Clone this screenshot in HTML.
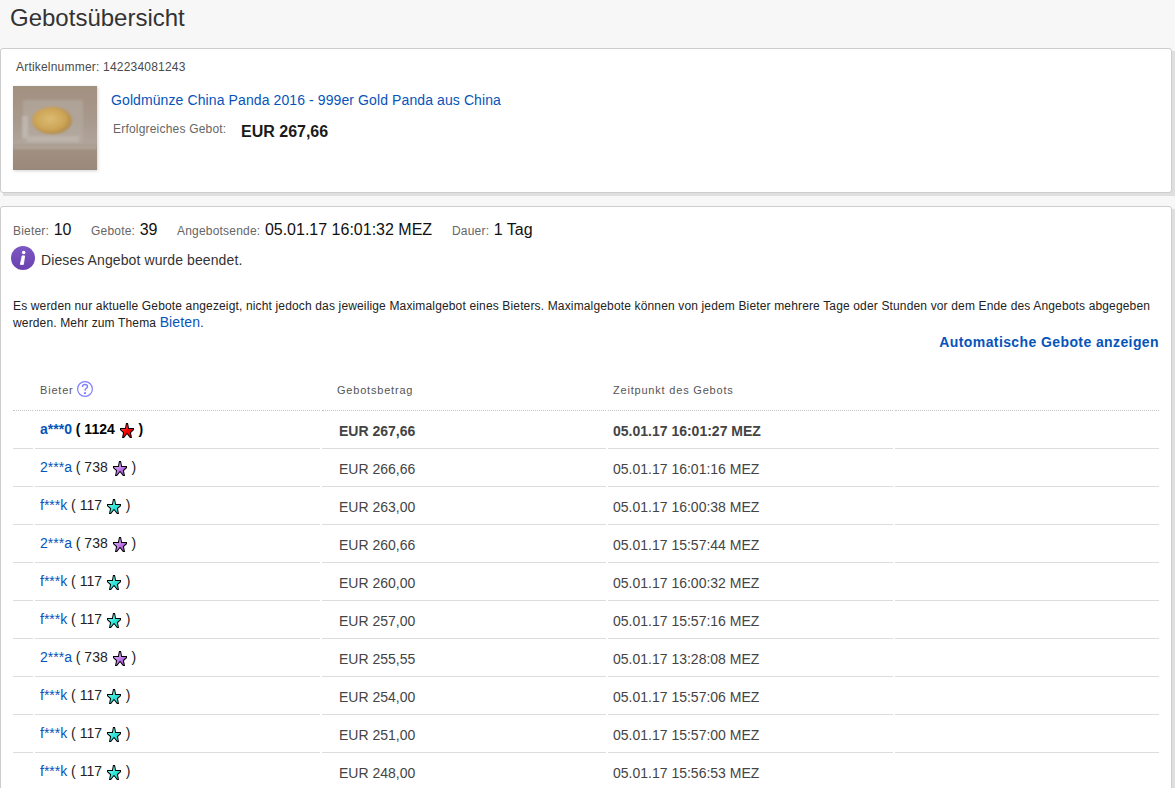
<!DOCTYPE html>
<html><head><meta charset="utf-8">
<style>
html,body{margin:0;padding:0;}
body{width:1175px;height:788px;overflow:hidden;background:#f7f7f7;font-family:"Liberation Sans",sans-serif;color:#333;position:relative;}
.abs{position:absolute;white-space:nowrap;}
h1{position:absolute;left:10px;top:3px;margin:0;font-size:24px;font-weight:normal;color:#333;line-height:30px;}
.panel{position:absolute;left:0;width:1170px;background:#fff;border:1px solid #cdcdcd;border-radius:3px;}
.shd{position:absolute;left:3px;width:1172px;background:#dfdfdf;}
#p1{top:48px;height:143px;}
#p2{top:206px;height:700px;}
.lbl{font-size:12px;color:#666;letter-spacing:.2px;}
a{color:#0654ba;text-decoration:none;}
.img{position:absolute;left:13px;top:86px;width:84px;height:84px;background:#a39689;box-shadow:1px 1px 3px rgba(0,0,0,.18);overflow:hidden;}
.img svg{display:block;}
table{position:absolute;left:11px;border-collapse:separate;border-spacing:2px 0;}
td{padding:0;border-bottom:1px solid #ddd;height:37px;font-size:14px;color:#444;white-space:nowrap;vertical-align:middle;}
td span{position:relative;}
.star{display:inline-block;vertical-align:-3px;position:relative;top:2px;}
.val{font-size:16px;color:#111;margin-left:1px;}
.info{position:absolute;left:11px;top:246px;width:24px;height:24px;border-radius:50%;background:linear-gradient(#7d58c4,#6942ae);}
.info i{position:absolute;left:0;top:0;width:24px;text-align:center;line-height:24px;color:#fff;font-weight:bold;font-size:17px;font-family:"Liberation Serif",serif;}
.para{font-size:12px;line-height:16px;color:#222;letter-spacing:.15px;}
tr.hd td{height:49px;border-bottom:1px dotted #c4c4c4;}
.th{position:absolute;font-size:11px;letter-spacing:.8px;color:#555;white-space:nowrap;}
.q{position:absolute;width:15px;height:15px;border:1px solid #8c8cff;border-radius:50%;color:#8c8cff;font-size:12px;line-height:15px;text-align:center;}
.bid{margin-left:5px;top:-1px;color:#222;}
.amt{margin-left:17px;top:1px;}
.dt{margin-left:5px;top:1px;}
tr.b td{font-weight:bold;}
tr.b .bid{color:#000;}
</style></head>
<body>
<svg width="0" height="0" style="position:absolute"><defs><linearGradient id="g-red" x1="0" y1="0" x2="1" y2="1"><stop offset="0" stop-color="#ff7070"/><stop offset=".5" stop-color="#ff0000"/><stop offset="1" stop-color="#e00000"/></linearGradient><g id="s-red"><path d="M7.00 1.00 L9.00 1.00 L10.00 6.00 L15.00 6.00 L15.00 8.00 L12.00 10.70 L13.00 16.00 L11.00 16.00 L8.00 12.30 L5.00 16.00 L3.00 16.00 L4.00 10.70 L1.00 8.00 L1.00 6.00 L6.00 6.00Z" fill="#000"/><path d="M7.82 2.00 L6.82 7.00 L2.00 7.00 L2.00 7.55 L5.09 10.33 L4.21 15.00 L4.52 15.00 L8.00 10.71 L11.48 15.00 L11.79 15.00 L10.91 10.33 L14.00 7.55 L14.00 7.00 L9.18 7.00 L8.18 2.00 L7.82 2.00Z" fill="url(#g-red)"/></g><linearGradient id="g-purple" x1="0" y1="0" x2="1" y2="1"><stop offset="0" stop-color="#e8c0ff"/><stop offset=".5" stop-color="#c080e8"/><stop offset="1" stop-color="#a030d0"/></linearGradient><g id="s-purple"><path d="M7.00 1.00 L9.00 1.00 L10.00 6.00 L15.00 6.00 L15.00 8.00 L12.00 10.70 L13.00 16.00 L11.00 16.00 L8.00 12.30 L5.00 16.00 L3.00 16.00 L4.00 10.70 L1.00 8.00 L1.00 6.00 L6.00 6.00Z" fill="#000"/><path d="M7.82 2.00 L6.82 7.00 L2.00 7.00 L2.00 7.55 L5.09 10.33 L4.21 15.00 L4.52 15.00 L8.00 10.71 L11.48 15.00 L11.79 15.00 L10.91 10.33 L14.00 7.55 L14.00 7.00 L9.18 7.00 L8.18 2.00 L7.82 2.00Z" fill="url(#g-purple)"/></g><linearGradient id="g-turq" x1="0" y1="0" x2="1" y2="1"><stop offset="0" stop-color="#b0fff8"/><stop offset=".5" stop-color="#30e8d8"/><stop offset="1" stop-color="#20c8c8"/></linearGradient><g id="s-turq"><path d="M7.00 1.00 L9.00 1.00 L10.00 6.00 L15.00 6.00 L15.00 8.00 L12.00 10.70 L13.00 16.00 L11.00 16.00 L8.00 12.30 L5.00 16.00 L3.00 16.00 L4.00 10.70 L1.00 8.00 L1.00 6.00 L6.00 6.00Z" fill="#000"/><path d="M7.82 2.00 L6.82 7.00 L2.00 7.00 L2.00 7.55 L5.09 10.33 L4.21 15.00 L4.52 15.00 L8.00 10.71 L11.48 15.00 L11.79 15.00 L10.91 10.33 L14.00 7.55 L14.00 7.00 L9.18 7.00 L8.18 2.00 L7.82 2.00Z" fill="url(#g-turq)"/></g></defs></svg>
<h1>Gebotsübersicht</h1>
<div class="shd" style="top:51px;height:145px;"></div><div class="panel" id="p1"></div>
<div class="abs lbl" style="left:16px;top:60px;color:#4a4a4a;">Artikelnummer: 142234081243</div>
<div class="img"><svg width="84" height="84" viewBox="0 0 84 84">
<defs>
<linearGradient id="bgc" x1="0" y1="0" x2="0" y2="1"><stop offset="0" stop-color="#a29080"/><stop offset=".45" stop-color="#a99a8e"/><stop offset=".68" stop-color="#b0a59b"/><stop offset=".73" stop-color="#a29182"/><stop offset="1" stop-color="#9a897a"/></linearGradient>
<radialGradient id="coin" cx=".45" cy=".45" r=".6"><stop offset="0" stop-color="#dcbb72"/><stop offset=".65" stop-color="#cca456"/><stop offset="1" stop-color="#a98444"/></radialGradient>
<filter id="bl"><feGaussianBlur stdDeviation=".8"/></filter>
</defs>
<rect width="84" height="84" fill="url(#bgc)"/>
<g filter="url(#bl)">
<rect x="10" y="14" width="60" height="43" rx="3" fill="#b5aba2" opacity=".6"/>
<rect x="9" y="30" width="6" height="22" fill="#c8c1bb" opacity=".6"/>
<rect x="14" y="50" width="52" height="6" fill="#c3bab2" opacity=".6"/>
<ellipse cx="39" cy="34.5" rx="20" ry="13.8" fill="url(#coin)"/>
<rect x="0" y="60" width="84" height="3" fill="#b6aca3" opacity=".7"/>
</g>
</svg></div>
<a class="abs" style="left:111px;top:92px;font-size:14px;letter-spacing:.1px;">Goldmünze China Panda 2016 - 999er Gold Panda aus China</a>
<div class="abs lbl" style="left:113px;top:122px;">Erfolgreiches Gebot:</div>
<div class="abs" style="left:241px;top:123px;font-size:16px;font-weight:bold;color:#1a1a1a;">EUR 267,66</div>

<div class="shd" style="top:209px;height:702px;"></div><div class="panel" id="p2"></div>
<div class="abs" style="left:13px;top:221px;"><span class="lbl">Bieter: </span><span class="val">10</span></div>
<div class="abs" style="left:91px;top:221px;"><span class="lbl">Gebote: </span><span class="val">39</span></div>
<div class="abs" style="left:177px;top:221px;"><span class="lbl">Angebotsende: </span><span class="val">05.01.17 16:01:32 MEZ</span></div>
<div class="abs" style="left:452px;top:221px;"><span class="lbl">Dauer: </span><span class="val">1 Tag</span></div>
<div class="info"><svg width="24" height="24" viewBox="0 0 24 24" style="display:block"><circle cx="12.7" cy="6.4" r="1.75" fill="#fff"/><path d="M11.2 9.9 L13.6 9.9 L12.4 18.4 L9.4 18.4 Z" fill="#fff" stroke="#fff" stroke-width=".9" stroke-linejoin="round"/></svg></div>
<div class="abs" style="left:41px;top:252px;font-size:14px;letter-spacing:.1px;">Dieses Angebot wurde beendet.</div>
<div class="abs para" style="left:13px;top:298px;">Es werden nur aktuelle Gebote angezeigt, nicht jedoch das jeweilige Maximalgebot eines Bieters. Maximalgebote können von jedem Bieter mehrere Tage oder Stunden vor dem Ende des Angebots abgegeben<br>werden. Mehr zum Thema <a style="font-size:14px">Bieten</a>.</div>
<a class="abs" style="right:16px;top:334px;font-size:14px;font-weight:bold;letter-spacing:.4px;">Automatische Gebote anzeigen</a>
<table id="bids" style="top:361px;">
<tr class="hd"><td style="width:20px"></td><td style="width:285px"></td><td style="width:284px"></td><td style="width:285px"></td><td style="width:264px"></td></tr>
<tr class="b"><td></td><td><span class="bid"><a>a***0</a> ( 1124 <svg class="star" width="16" height="17" viewBox="0 0 16 17"><use href="#s-red"/></svg> )</span></td><td><span class="amt">EUR 267,66</span></td><td><span class="dt">05.01.17 16:01:27 MEZ</span></td><td></td></tr>
<tr><td></td><td><span class="bid"><a>2***a</a> ( 738 <svg class="star" width="16" height="17" viewBox="0 0 16 17"><use href="#s-purple"/></svg> )</span></td><td><span class="amt">EUR 266,66</span></td><td><span class="dt">05.01.17 16:01:16 MEZ</span></td><td></td></tr>
<tr><td></td><td><span class="bid"><a>f***k</a> ( 117 <svg class="star" width="16" height="17" viewBox="0 0 16 17"><use href="#s-turq"/></svg> )</span></td><td><span class="amt">EUR 263,00</span></td><td><span class="dt">05.01.17 16:00:38 MEZ</span></td><td></td></tr>
<tr><td></td><td><span class="bid"><a>2***a</a> ( 738 <svg class="star" width="16" height="17" viewBox="0 0 16 17"><use href="#s-purple"/></svg> )</span></td><td><span class="amt">EUR 260,66</span></td><td><span class="dt">05.01.17 15:57:44 MEZ</span></td><td></td></tr>
<tr><td></td><td><span class="bid"><a>f***k</a> ( 117 <svg class="star" width="16" height="17" viewBox="0 0 16 17"><use href="#s-turq"/></svg> )</span></td><td><span class="amt">EUR 260,00</span></td><td><span class="dt">05.01.17 16:00:32 MEZ</span></td><td></td></tr>
<tr><td></td><td><span class="bid"><a>f***k</a> ( 117 <svg class="star" width="16" height="17" viewBox="0 0 16 17"><use href="#s-turq"/></svg> )</span></td><td><span class="amt">EUR 257,00</span></td><td><span class="dt">05.01.17 15:57:16 MEZ</span></td><td></td></tr>
<tr><td></td><td><span class="bid"><a>2***a</a> ( 738 <svg class="star" width="16" height="17" viewBox="0 0 16 17"><use href="#s-purple"/></svg> )</span></td><td><span class="amt">EUR 255,55</span></td><td><span class="dt">05.01.17 13:28:08 MEZ</span></td><td></td></tr>
<tr><td></td><td><span class="bid"><a>f***k</a> ( 117 <svg class="star" width="16" height="17" viewBox="0 0 16 17"><use href="#s-turq"/></svg> )</span></td><td><span class="amt">EUR 254,00</span></td><td><span class="dt">05.01.17 15:57:06 MEZ</span></td><td></td></tr>
<tr><td></td><td><span class="bid"><a>f***k</a> ( 117 <svg class="star" width="16" height="17" viewBox="0 0 16 17"><use href="#s-turq"/></svg> )</span></td><td><span class="amt">EUR 251,00</span></td><td><span class="dt">05.01.17 15:57:00 MEZ</span></td><td></td></tr>
<tr><td></td><td><span class="bid"><a>f***k</a> ( 117 <svg class="star" width="16" height="17" viewBox="0 0 16 17"><use href="#s-turq"/></svg> )</span></td><td><span class="amt">EUR 248,00</span></td><td><span class="dt">05.01.17 15:56:53 MEZ</span></td><td></td></tr>
</table>
<div class="th" style="left:40px;top:384px;">Bieter</div>
<svg class="q2" style="position:absolute;left:77px;top:381px;" width="16" height="16" viewBox="0 0 16 16"><circle cx="8" cy="8" r="7.4" fill="none" stroke="#8080ff" stroke-width="1.2"/><path d="M5.6 6 L5.6 4.6 Q5.9 3.5 7.8 3.5 Q10.45 3.5 10.45 5.4 Q10.45 6.6 9.2 7.3 Q8 8 8 9.8" fill="none" stroke="#8080ff" stroke-width="1.4"/><rect x="7" y="11.2" width="2" height="1.8" fill="#8080ff"/></svg>
<div class="th" style="left:337px;top:384px;">Gebotsbetrag</div>
<div class="th" style="left:613px;top:384px;">Zeitpunkt des Gebots</div>
</body></html>
